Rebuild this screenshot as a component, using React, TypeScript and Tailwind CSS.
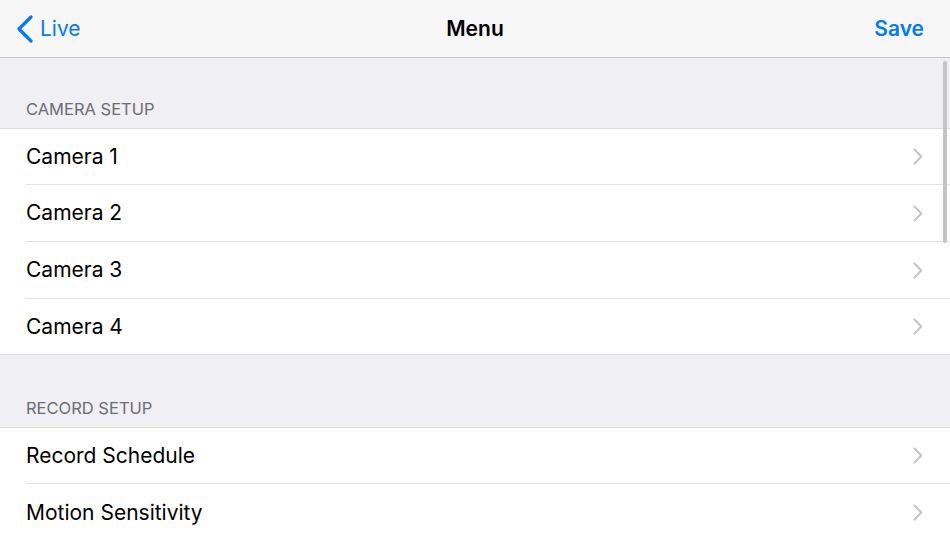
import React from 'react';

const font = { fontFamily: 'Inter, "Liberation Sans", sans-serif' };

interface Section {
  title: string;
  items: string[];
}

const sections: Section[] = [
  { title: 'CAMERA SETUP', items: ['Camera 1', 'Camera 2', 'Camera 3', 'Camera 4'] },
  { title: 'RECORD SETUP', items: ['Record Schedule', 'Motion Sensitivity'] },
];

// row heights include the 1px separator, so the lines land on the same pixels as the reference
const rowHeights = ['h-[56px]', 'h-[57px]', 'h-[57px]', 'h-[55px]'];

const Chevron = () => (
  <svg width="10" height="17" viewBox="0 0 10 17" className="shrink-0">
    <path d="M1.5 1.5 L8.3 8.5 L1.5 15.5" fill="none" stroke="#c4c4c9" strokeWidth="2" strokeLinecap="round" strokeLinejoin="round" />
  </svg>
);

const BackChevron = () => (
  <svg width="18" height="28" viewBox="0 0 18 28">
    <path d="M15 2 L3 14 L15 26" fill="none" stroke="#007aff" strokeWidth="3.2" strokeLinecap="round" strokeLinejoin="round" />
  </svg>
);

const App: React.FC = () => {
  return (
    <div className="relative h-[534px] w-[950px] overflow-hidden bg-[#efeff4]" style={font}>
      {/* Navigation bar */}
      <div className="flex h-[58px] items-center justify-between border-b border-[#c8c7cc] bg-[#f7f7f8] px-[16px]">
        <div className="flex items-center gap-[6px]">
          <BackChevron />
          <span className="text-[21px] text-[#007aff]">Live</span>
        </div>
        <span className="absolute left-1/2 -translate-x-1/2 text-[21px] font-semibold text-black">Menu</span>
        <span className="pr-[10px] text-[21px] font-semibold text-[#007aff]">Save</span>
      </div>

      {/* Sections */}
      <div className="flex flex-col">
        {sections.map((section, si) => (
          <div key={section.title} className={si === 0 ? 'pt-[41px]' : 'pt-[43px]'}>
            <div className="px-[26px] pb-[9px] text-[16.5px] leading-[20px] text-[#6d6d72]">{section.title}</div>
            <div className="border-y border-[#dcdce0] bg-white">
              {section.items.map((item, i) => (
                <div key={item} className="pl-[26px]">
                  <div
                    className={
                      'flex items-center justify-between pr-[27px] ' +
                      rowHeights[i] +
                      (i < section.items.length - 1 ? ' border-b border-[#e4e4e7]' : '')
                    }
                  >
                    <span className="text-[21px] text-black">{item}</span>
                    <Chevron />
                  </div>
                </div>
              ))}
            </div>
          </div>
        ))}
      </div>

      {/* Scroll indicator */}
      <div className="absolute right-[3px] top-[61px] h-[182px] w-[4px] rounded-full bg-[#c5c5c9]" />
    </div>
  );
};

export default App;
